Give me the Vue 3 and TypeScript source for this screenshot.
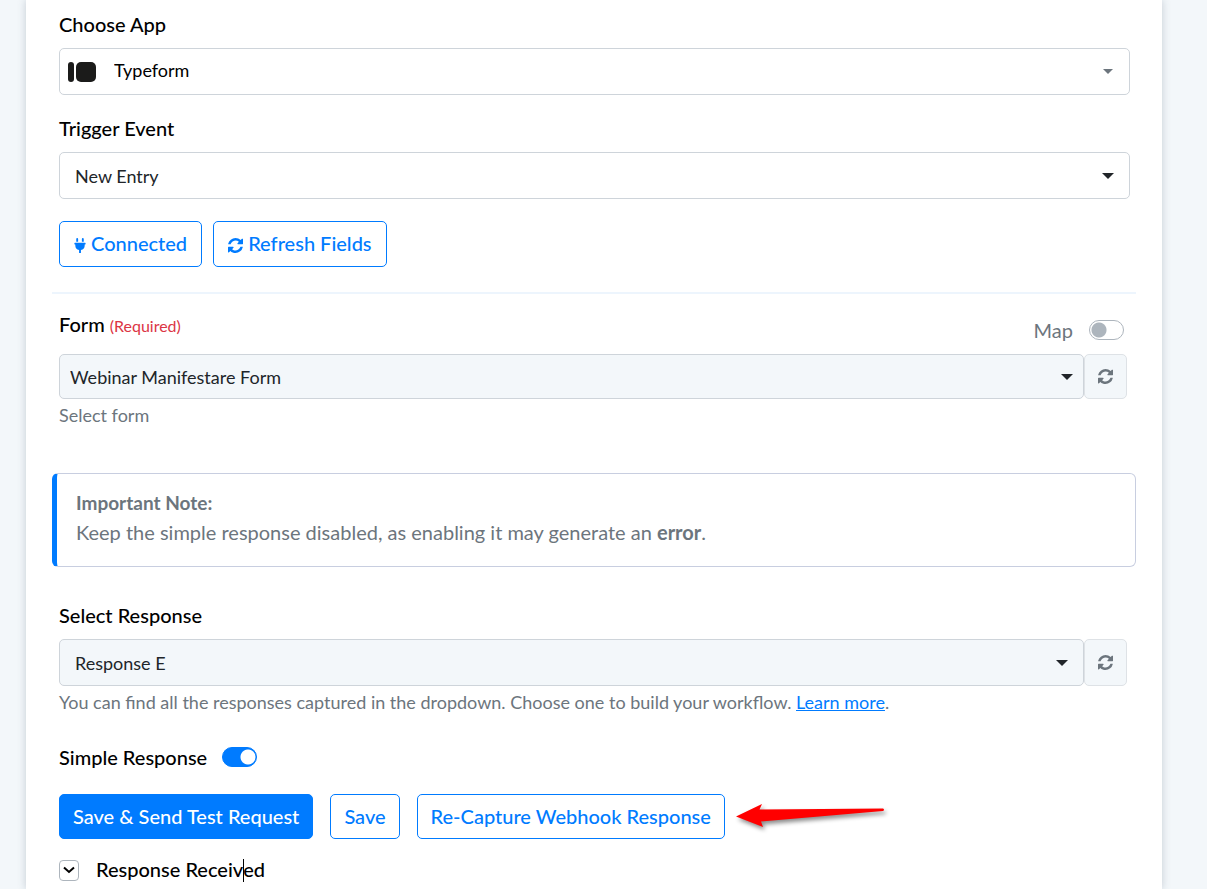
<script setup lang="ts">
import { ref } from 'vue'

const app = ref('Typeform')
const triggerEvent = ref('New Entry')
const form = ref('Webinar Manifestare Form')
const response = ref('Response E')
const mapForm = ref(false)
const simpleResponse = ref(true)

const refreshPath =
  'M1511 928q0 5-1 7-64 268-268 434.500t-478 166.500q-146 0-282.500-55t-243.500-157l-129 129q-19 19-45 19t-45-19-19-45v-448q0-26 19-45t45-19h448q26 0 45 19t19 45-19 45l-137 137q71 66 161 102t187 36q134 0 250-65t186-179q11-17 53-117 8-23 30-23h192q13 0 22.500 9.500t9.500 22.500zm25-800v448q0 26-19 45t-45 19h-448q-26 0-45-19t-19-45 19-45l138-138q-148-137-349-137-134 0-250 65t-186 179q-11 17-53 117-8 23-30 23h-199q-13 0-22.500-9.500t-9.500-22.500v-7q65-268 270-434.500t480-166.500q146 0 284 55.500t245 156.500l130-129q19-19 45-19t45 19 19 45z'
</script>

<template>
  <main class="page">
    <form class="card" @submit.prevent>
      <div class="field">
        <label class="label" for="app">Choose App</label>
        <div class="select">
          <svg class="app-logo" viewBox="0 0 30 20" aria-hidden="true">
            <rect x="1" y="0" width="6" height="20" rx="3" />
            <rect x="9" y="0" width="20" height="20" rx="5" />
          </svg>
          <select id="app" v-model="app" class="with-logo">
            <option>Typeform</option>
          </select>
          <svg class="caret small" viewBox="0 0 12 6" aria-hidden="true"><path d="M0 0h12L6 6z" /></svg>
        </div>
      </div>

      <div class="field">
        <label class="label" for="event">Trigger Event</label>
        <div class="select">
          <select id="event" v-model="triggerEvent">
            <option>New Entry</option>
          </select>
          <svg class="caret" viewBox="0 0 12 6" aria-hidden="true"><path d="M0 0h12L6 6z" /></svg>
        </div>
      </div>

      <div class="actions connection">
        <button type="button" class="btn">
          <svg class="plug" viewBox="0 0 384 512" aria-hidden="true">
            <path d="M320,32a32,32,0,0,0-64,0v96h64Zm48,128H16A16,16,0,0,0,0,176v32a16,16,0,0,0,16,16H32v32A160.07,160.07,0,0,0,160,412.800V512h64V412.800A160.07,160.07,0,0,0,352,256V224h16a16,16,0,0,0,16-16V176A16,16,0,0,0,368,160ZM128,32a32,32,0,0,0-64,0v96h64Z" />
          </svg>
          Connected
        </button>
        <button type="button" class="btn">
          <svg class="sync" viewBox="0 0 1536 1536" aria-hidden="true"><path :d="refreshPath" /></svg>
          Refresh Fields
        </button>
      </div>

      <hr class="divider" />

      <div class="field form-field">
        <div class="label-row">
          <label class="label" for="form">Form <small class="required">(Required)</small></label>
          <label class="map">
            Map
            <input v-model="mapForm" type="checkbox" role="switch" class="switch" />
          </label>
        </div>
        <div class="group">
          <div class="select compact">
            <select id="form" v-model="form">
              <option>Webinar Manifestare Form</option>
            </select>
            <svg class="caret" viewBox="0 0 12 6" aria-hidden="true"><path d="M0 0h12L6 6z" /></svg>
          </div>
          <button type="button" class="reload" aria-label="Reload forms">
            <svg class="sync" viewBox="0 0 1536 1536" aria-hidden="true"><path :d="refreshPath" /></svg>
          </button>
        </div>
        <p class="help">Select form</p>
      </div>

      <section class="note">
        <strong>Important Note:</strong>
        <p>Keep the simple response disabled, as enabling it may generate an <strong>error</strong>.</p>
      </section>

      <div class="field response-field">
        <label class="label" for="response">Select Response</label>
        <div class="group">
          <div class="select filled">
            <select id="response" v-model="response">
              <option>Response E</option>
            </select>
            <svg class="caret" viewBox="0 0 12 6" aria-hidden="true"><path d="M0 0h12L6 6z" /></svg>
          </div>
          <button type="button" class="reload" aria-label="Reload responses">
            <svg class="sync" viewBox="0 0 1536 1536" aria-hidden="true"><path :d="refreshPath" /></svg>
          </button>
        </div>
        <p class="help">
          You can find all the responses captured in the dropdown. Choose one to build your workflow.
          <a href="#">Learn more</a>.
        </p>
      </div>

      <label class="simple">
        Simple Response
        <input v-model="simpleResponse" type="checkbox" role="switch" class="switch" />
      </label>

      <div class="actions submit">
        <button type="submit" class="btn primary">Save &amp; Send Test Request</button>
        <button type="button" class="btn">Save</button>
        <button type="button" class="btn">Re-Capture Webhook Response</button>
        <svg class="arrow" viewBox="0 0 150 26" aria-hidden="true">
          <path d="M0 12.500 L26 0 L23.500 5.500 L147 4.500 Q149 5.500 147 7 L25 17.500 L27 23 Z" />
        </svg>
      </div>

      <div class="received">
        <button type="button" class="toggle" aria-label="Toggle response">
          <svg viewBox="0 0 12 8" aria-hidden="true"><path d="M1 1.500l5 4.500 5-4.500" /></svg>
        </button>
        <span class="received-title">Response Receiv<i class="text-cursor"></i>ed</span>
      </div>
    </form>
  </main>
</template>

<style>
body {
  margin: 0;
  background: #f3f7fa;
}
</style>

<style scoped>
.page {
  display: flow-root;
  height: 100vh;
  overflow: hidden;
  padding: 0 45px 0 26px;
  box-sizing: border-box;
  background: #f3f7fa;
  color: #000;
  font-family: Lato, "Noto Sans", sans-serif;
  font-size: 20px;
  line-height: 28px;
}
.card {
  min-height: 100vh;
  box-sizing: border-box;
  padding: 10px 32px 0 33px;
  background: #fff;
  box-shadow: 0 0 8px rgba(60, 80, 100, 0.25);
}
.field {
  margin-bottom: 19px;
}
.label {
  display: block;
  margin-bottom: 10px;
  font-weight: 500;
}
.select {
  position: relative;
  flex: 1;
}
select {
  display: block;
  width: 100%;
  height: 47px;
  padding: 0 40px 0 15px;
  border: 1px solid #ced4da;
  border-radius: 5px;
  background: #fff;
  color: #212529;
  font: inherit;
  font-size: 18px;
  appearance: none;
}
.with-logo {
  padding-left: 54px;
  padding-bottom: 4px;
  color: #000;
}
.app-logo {
  position: absolute;
  left: 8px;
  top: 14px;
  width: 30px;
  height: 20px;
  fill: #1b1b1a;
}
.caret {
  position: absolute;
  right: 16px;
  top: 21px;
  width: 12px;
  height: 6px;
  fill: #212529;
  pointer-events: none;
}
.caret.small {
  right: 17px;
  width: 10px;
  height: 5px;
  fill: #6c757d;
}
.filled select,
.compact select {
  background: #f3f7fa;
}
.compact select {
  height: 45px;
  padding-left: 10px;
}
.compact .caret {
  right: 11px;
  top: 20px;
}
.actions {
  display: flex;
  align-items: center;
}
.connection {
  gap: 11px;
  margin-top: 22px;
}
.btn {
  height: 45px;
  padding: 0 13px 2px;
  border: 1px solid #007bff;
  border-radius: 5px;
  background: #fff;
  color: #007bff;
  font: inherit;
  font-weight: 500;
  white-space: nowrap;
}
.connection .btn {
  height: 46px;
  padding: 0 14px 2px;
}
.primary {
  background: #007bff;
  color: #fff;
}
.plug {
  width: 12px;
  height: 15px;
  fill: currentColor;
  vertical-align: -2px;
}
.sync {
  width: 15px;
  height: 15px;
  fill: currentColor;
  vertical-align: -2px;
}
.divider {
  height: 2px;
  margin: 25px -6px 16px -7px;
  border: 0;
  background: #edf5fd;
}
.form-field {
  margin-bottom: 44px;
}
.response-field {
  margin-bottom: 27px;
}
.label-row {
  display: flex;
  justify-content: space-between;
  height: 44px;
}
.required {
  color: #dc3545;
  font-size: 16px;
  font-weight: 400;
}
.map {
  display: flex;
  align-items: center;
  gap: 16px;
  height: 40px;
  margin-right: 6px;
  color: #6c757d;
}
.switch {
  width: 35px;
  height: 20px;
  margin: 0;
  border: 1px solid #adb5bd;
  border-radius: 10px;
  background: radial-gradient(circle at 9px 9px, #adb5bd 7px, transparent 8px) #fff;
  appearance: none;
}
.switch:checked {
  border-color: #007bff;
  background: radial-gradient(circle at 25px 9px, #fff 7px, transparent 8px) #007bff;
}
.group {
  display: flex;
  margin-right: 3px;
}
.reload {
  width: 43px;
  padding: 0;
  border: 1px solid #dee2e6;
  border-radius: 5px;
  background: #f3f7fa;
  color: #6c757d;
}
.help {
  margin: 2px 0 0;
  color: #6c757d;
  font-size: 18px;
}
.help a {
  color: #007bff;
  text-decoration: underline;
}
.note {
  margin: 0 -6px 34px -7px;
  padding: 14px 19px 16px;
  border: 1px solid #c8cee0;
  border-left: 5px solid #007bff;
  border-radius: 6px;
  color: #6c757d;
}
.note > strong {
  font-size: 19px;
}
.note p {
  margin: 1px 0 4px;
}
.simple {
  display: flex;
  align-items: center;
  gap: 15px;
  font-weight: 500;
}
.submit {
  gap: 17px;
  margin-top: 23px;
}
.arrow {
  width: 150px;
  height: 26px;
  margin-left: -6px;
  fill: #f00;
  overflow: visible;
  filter: drop-shadow(2px 3px 2px rgba(0, 0, 0, 0.45));
}
.received {
  display: flex;
  align-items: center;
  gap: 17px;
  margin-top: 16px;
  font-weight: 500;
}
.received-title {
  padding-bottom: 2px;
}
.toggle {
  display: grid;
  place-items: center;
  width: 20px;
  height: 21px;
  padding: 0;
  border: 1px solid #adb5bd;
  border-radius: 4px;
  background: #fff;
}
.toggle svg {
  width: 12px;
  height: 8px;
  fill: none;
  stroke: #000;
  stroke-width: 2;
}
.text-cursor {
  display: inline-block;
  width: 1px;
  height: 23px;
  margin-right: -1px;
  background: #000;
  vertical-align: -5px;
}
</style>
